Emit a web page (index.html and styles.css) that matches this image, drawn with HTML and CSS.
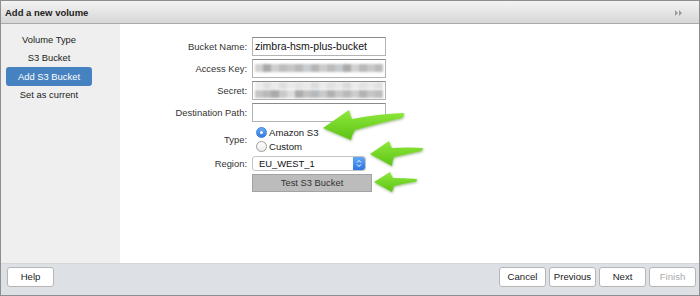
FILE: index.html
```html
<!DOCTYPE html>
<html lang="en">
<head>
<meta charset="utf-8">
<title>Add a new volume</title>
<link rel="stylesheet" href="styles.css">
</head>
<body>
<div class="window">
  <div class="titlebar">
    <span class="title">Add a new volume</span>
    <svg class="collapse" width="8" height="6" viewBox="0 0 8 6"><polygon points="0,0 3,3 0,6" fill="#9a9a9a"/><polygon points="4,0 7,3 4,6" fill="#9a9a9a"/></svg>
  </div>
  <div class="body">
    <nav class="steps">
      <div class="step">Volume Type</div>
      <div class="step">S3 Bucket</div>
      <div class="step active">Add S3 Bucket</div>
      <div class="step">Set as current</div>
    </nav>
    <main class="content">
      <div class="form">
        <div class="lbl">Bucket Name:</div>
        <div class="field"><div class="input">zimbra-hsm-plus-bucket</div></div>

        <div class="lbl">Access Key:</div>
        <div class="field"><div class="input"><div class="blur key"></div></div></div>

        <div class="lbl">Secret:</div>
        <div class="field"><div class="input secret"><div class="blur sec1"></div><div class="blur sec2"></div></div></div>

        <div class="lbl">Destination Path:</div>
        <div class="field"><div class="input"></div></div>

        <div class="lbl">Type:</div>
        <div class="field radios">
          <div class="radio-row"><span class="radio on"></span><span>Amazon S3</span></div>
          <div class="radio-row"><span class="radio"></span><span>Custom</span></div>
        </div>

        <div class="lbl">Region:</div>
        <div class="field"><div class="select"><span class="sel-text">EU_WEST_1</span><span class="stepper"><svg width="6" height="9" viewBox="0 0 6 9"><polyline points="1,3.5 3,1.5 5,3.5" fill="none" stroke="#fff" stroke-width="1"/><polyline points="1,5.5 3,7.5 5,5.5" fill="none" stroke="#fff" stroke-width="1"/></svg></span></div></div>

        <div class="lbl"></div>
        <div class="field"><div class="test-btn">Test S3 Bucket</div></div>
      </div>
    </main>
  </div>
  <div class="footer">
    <div class="btn">Help</div>
    <div class="spacer"></div>
    <div class="btn">Cancel</div>
    <div class="btn">Previous</div>
    <div class="btn">Next</div>
    <div class="btn disabled">Finish</div>
  </div>
  <svg class="arrows" width="700" height="296" viewBox="0 0 700 296">
    <defs>
      <linearGradient id="g" x1="0" y1="0" x2="0" y2="1">
        <stop offset="0" stop-color="#8fe93c"/>
        <stop offset="1" stop-color="#5cc314"/>
      </linearGradient>
      <filter id="sh" x="-20%" y="-30%" width="140%" height="170%">
        <feDropShadow dx="0.5" dy="1.2" stdDeviation="0.9" flood-color="#2f6a0a" flood-opacity="0.45"/>
      </filter>
    </defs>
    <path filter="url(#sh)" fill="url(#g)" d="M323,128 Q336,119 349,110 Q350,115 352,119 Q378,114 404,113 Q404,116 402,118 Q380,123 355,130 Q352,134 351,140 Q337,134 323,128 Z"/>
    <path filter="url(#sh)" fill="url(#g)" d="M370,154 Q379,148 389,141 Q390,145 392,148 Q408,147 423,148 Q423,150 421,151 Q408,154 394,157 Q392,161 392,166 Q381,160 370,154 Z"/>
    <path filter="url(#sh)" fill="url(#g)" d="M374,182 Q382,177 390,172 Q391,175 393,178 Q405,178 417,179 Q417,180.5 416,181.5 Q405,183 394,186 Q393,189 392,192 Q383,187 374,182 Z"/>
  </svg>
</div>
</body>
</html>
```
FILE: styles.css
```css
* { box-sizing: border-box; }
html, body { margin: 0; padding: 0; background: #fff; }
body { font-family: "Liberation Sans", Arial, Helvetica, sans-serif; }

.window {
  position: relative;
  width: 700px;
  height: 296px;
  border: 1px solid #8e8e8e;
  display: flex;
  flex-direction: column;
  overflow: hidden;
}

.titlebar {
  height: 23px;
  flex: none;
  border-bottom: 1px solid #a9a9a9;
  background: linear-gradient(#f3f3f3, #d7d7d7);
  display: flex;
  align-items: center;
  justify-content: space-between;
  padding: 0 16px 0 4px;
}
.title { font-weight: bold; font-size: 9.5px; color: #222; }
.collapse { display: block; margin-top: 1px; }

.body {
  flex: 1;
  display: flex;
  min-height: 0;
}

.steps {
  width: 119px;
  flex: none;
  background: #efefef;
  padding: 7px 0 0 5px;
}
.step {
  width: 86px;
  height: 18px;
  line-height: 18px;
  text-align: center;
  font-size: 9.4px;
  color: #222;
}
.step.active {
  height: 19px;
  line-height: 19px;
  background: #4682c0;
  color: #fff;
  border-radius: 3px;
}

.content {
  flex: 1;
  background: #fff;
  padding-top: 13px;
}

.form {
  display: grid;
  grid-template-columns: 127px auto;
  column-gap: 5px;
  row-gap: 3px;
  align-items: center;
}
.lbl {
  text-align: right;
  font-size: 9.4px;
  color: #333;
}
.field { display: flex; flex-direction: column; align-items: flex-start; }

.input {
  width: 134px;
  height: 19px;
  border: 1px solid #b3b3b3;
  border-top-color: #8a8a8a;
  background: #fff;
  font-size: 10.5px;
  color: #111;
  padding: 0 2px;
  line-height: 17px;
  overflow: hidden;
}
.blur {
  height: 8px;
  filter: blur(0.9px);
}
.key {
  margin-top: 4px;
  background: linear-gradient(to right,
    #d0d0d0 0 8px, #a9a9a9 8px 16px, #cfcfcf 16px 24px, #bdbdbd 24px 32px,
    #c6c6c6 32px 40px, #b8b8b8 40px 48px, #c9cdd1 48px 56px, #b5b5b5 56px 64px,
    #cccccc 64px 72px, #bcbcbc 72px 80px, #c5c9cc 80px 88px, #aaaaaa 88px 96px,
    #d2d2d2 96px 104px, #b9b9b9 104px 112px, #c8c8c8 112px 120px, #bbbbbb 120px 128px);
}
.secret { padding-top: 0; }
.sec1 {
  height: 7px;
  background: linear-gradient(to right,
    #ececec 0 8px, #e0e0e0 8px 16px, #ebebeb 16px 24px, #dedede 24px 32px,
    #eaeaea 32px 40px, #e3e3e3 40px 48px, #e8eaec 48px 56px, #dcdcdc 56px 64px,
    #ebebeb 64px 72px, #e1e1e1 72px 80px, #e6e8ea 80px 88px, #dadada 88px 96px,
    #ececec 96px 104px, #e2e2e2 104px 112px, #e9e9e9 112px 120px, #e0e0e0 120px 128px);
}
.sec2 {
  margin-top: 1px;
  background: linear-gradient(to right,
    #c4c4c4 0 8px, #b9b9b9 8px 16px, #aaaaaa 16px 24px, #c9c9c9 24px 32px,
    #dddddd 32px 40px, #acacac 40px 48px, #c2c2c2 48px 56px, #b4b9be 56px 64px,
    #c9c9c9 64px 72px, #b1b1b1 72px 80px, #c8c8c8 80px 88px, #bababa 88px 96px,
    #cdcdcd 96px 104px, #b3b3b3 104px 112px, #c6c6c6 112px 120px, #bcbcbc 120px 128px);
}

.radios { padding-left: 4px; }
.radio-row {
  height: 14px;
  display: flex;
  align-items: center;
  gap: 2px;
  font-size: 9.6px;
  color: #222;
}
.radio {
  width: 11px;
  height: 11px;
  border-radius: 50%;
  border: 1px solid #9c9c9c;
  background: linear-gradient(#ffffff, #ececec);
  display: flex;
  align-items: center;
  justify-content: center;
}
.radio.on {
  border-color: #3c82dc;
  background: linear-gradient(#6aaaf5, #2f7ae3);
}
.radio.on::after {
  content: "";
  width: 3px;
  height: 3px;
  border-radius: 50%;
  background: #fff;
}

.select {
  width: 114px;
  height: 15px;
  border: 1px solid #c4c4c4;
  border-radius: 3px;
  background: #fff;
  display: flex;
  align-items: center;
  justify-content: space-between;
  font-size: 9.4px;
  color: #111;
  overflow: hidden;
}
.sel-text { padding-left: 6px; }
.stepper {
  width: 12px;
  height: 13px;
  background: linear-gradient(#62a7f6, #2b76e4);
  border-radius: 0 2px 2px 0;
  display: flex;
  align-items: center;
  justify-content: center;
}
.stepper svg { display: block; }

.test-btn {
  width: 120px;
  height: 18px;
  background: #bcbcbc;
  border: 1px solid #a3a3a3;
  text-align: center;
  line-height: 16px;
  font-size: 9.4px;
  color: #333;
}

.footer {
  height: 32px;
  flex: none;
  background: #dde0e5;
  border-top: 1px solid #d3d6db;
  display: flex;
  align-items: flex-start;
  gap: 3px;
  padding: 3px 3px 0 6px;
}
.spacer { flex: 1; }
.btn {
  width: 47px;
  height: 20px;
  background: #fff;
  border: 1px solid #b6b6b6;
  border-radius: 3px;
  text-align: center;
  line-height: 18px;
  font-size: 9.6px;
  color: #222;
}
.btn.disabled { color: #ababab; }

.arrows {
  position: absolute;
  left: -1px;
  top: -1px;
  pointer-events: none;
}
```
